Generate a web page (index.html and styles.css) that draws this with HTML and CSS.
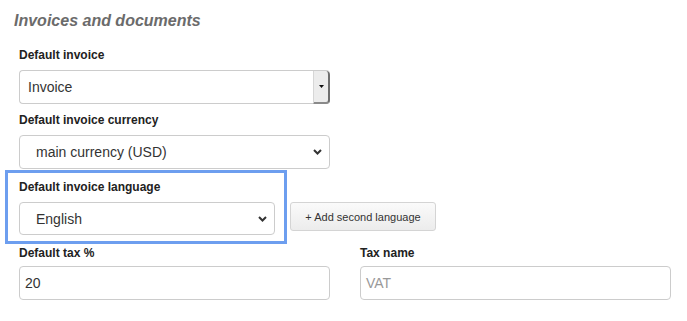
FILE: index.html
```html
<!DOCTYPE html>
<html>
<head>
<meta charset="utf-8">
<link rel="stylesheet" href="styles.css">
</head>
<body>
<div class="page">
  <h2 class="title">Invoices and documents</h2>

  <div class="field">
    <div class="label">Default invoice</div>
    <div class="select legacy">
      <span class="value first">Invoice</span>
      <span class="ddbtn"><svg width="5" height="3" viewBox="0 0 5 3"><path d="M0 0h5L2.5 3z" fill="#111"/></svg></span>
    </div>
  </div>

  <div class="field tight">
    <div class="label">Default invoice currency</div>
    <div class="select">
      <span class="value">main currency (USD)</span>
      <svg class="chev" width="9" height="6" viewBox="0 0 9 6"><path d="M1 1l3.5 3.5L8 1" fill="none" stroke="#333" stroke-width="2"/></svg>
    </div>
  </div>

  <div class="highlight">
    <div class="label">Default invoice language</div>
    <div class="row">
      <div class="select lang">
        <span class="value">English</span>
        <svg class="chev" width="9" height="6" viewBox="0 0 9 6"><path d="M1 1l3.5 3.5L8 1" fill="none" stroke="#333" stroke-width="2"/></svg>
      </div>
      <button class="btn">+ Add second language</button>
    </div>
  </div>

  <div class="cols">
    <div class="col">
      <div class="label">Default tax %</div>
      <div class="input"><span class="value in">20</span></div>
    </div>
    <div class="col">
      <div class="label">Tax name</div>
      <div class="input"><span class="value in ph">VAT</span></div>
    </div>
  </div>
</div>
</body>
</html>
```

FILE: styles.css
```css
* { box-sizing: border-box; }
html, body { margin: 0; padding: 0; background: #fff; }
body { font-family: "Liberation Sans", Arial, sans-serif; color: #222; }

.page { padding: 10px 17px 0 19px; width: 687px; }

.title {
  margin: 0 0 15px -5px;
  font-size: 16px;
  line-height: 22px;
  font-weight: bold;
  font-style: italic;
  color: #6b6b6b;
}

.label {
  font-size: 12px;
  line-height: 16px;
  font-weight: bold;
  color: #222;
  margin-bottom: 7px;
}

.field { margin-bottom: 8px; }
.field.tight { margin-bottom: 1px; }

.select, .input {
  width: 311px;
  height: 34px;
  border: 1px solid #ccc;
  border-radius: 4px;
  background: #fff;
  display: flex;
  align-items: center;
  flex-shrink: 0;
}

.value { font-size: 14px; color: #333; padding-left: 16px; flex: 1; white-space: nowrap; }
.value.first { padding-left: 8px; }
.value.in { padding-left: 5px; }
.value.ph { color: #999; }

.chev { margin-right: 7px; }

.legacy { border-right: none; }
.ddbtn {
  width: 17px;
  height: 33px;
  align-self: flex-start;
  background: #ececec;
  border-left: 1px solid #d6d6d6;
  border-right: 2px solid #6e6e6e;
  border-bottom: 2px solid #8a8a8a;
  border-top-right-radius: 4px;
  border-bottom-right-radius: 4px;
  display: flex;
  align-items: center;
  justify-content: center;
}

.highlight {
  width: 282px;
  margin-left: -14px;
  border: 3px solid #6d9eef;
  padding: 6px 0 6px 11px;
}
.row { display: flex; align-items: flex-start; gap: 15px; width: 440px; }
.select.lang { width: 256px; height: 33px; }

.btn {
  flex-shrink: 0;
  white-space: nowrap;
  font-family: "Liberation Sans", Arial, sans-serif;
  font-size: 11px;
  color: #333;
  width: 146px;
  height: 29px;
  padding: 0;
  border: 1px solid #d4d4d4;
  border-radius: 3px;
  background: linear-gradient(#fafafa, #ececec);
}

.cols { display: flex; gap: 30px; margin-top: 1px; }
.col .label { margin-bottom: 5px; }
.col .input { width: 311px; }
```
